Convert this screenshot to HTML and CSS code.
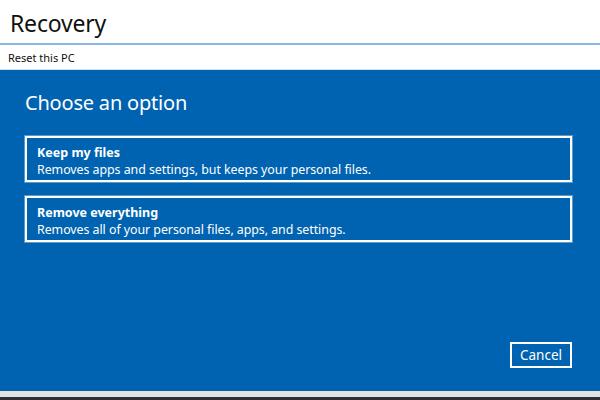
FILE: index.html
```html
<!DOCTYPE html>
<html lang="en">
<head>
<meta charset="utf-8">
<title>Recovery</title>
<link rel="stylesheet" href="styles.css">
</head>
<body>
<div class="app">
  <header class="header">
    <h1 class="title">Recovery</h1>
  </header>
  <div class="subbar">Reset this PC</div>
  <main class="dialog">
    <h2 class="dialog-title">Choose an option</h2>
    <div class="options">
      <button class="option">
        <span class="option-name">Keep my files</span>
        <span class="option-desc">Removes apps and settings, but keeps your personal files.</span>
      </button>
      <button class="option">
        <span class="option-name">Remove everything</span>
        <span class="option-desc">Removes all of your personal files, apps, and settings.</span>
      </button>
    </div>
    <div class="actions">
      <button class="cancel">Cancel</button>
    </div>
  </main>
  <div class="footer"></div>
</div>
</body>
</html>
```

FILE: styles.css
```css
* { box-sizing: border-box; }
html, body {
  margin: 0;
  padding: 0;
  width: 600px;
  height: 400px;
  overflow: hidden;
  background: #ffffff;
  font-family: "Noto Sans", "Open Sans", sans-serif;
}
.app {
  display: flex;
  flex-direction: column;
  height: 400px;
}
.header {
  height: 45px;
  border-bottom: 2px solid #8cb7e3;
  padding-left: 10px;
  flex: none;
}
.title {
  margin: 0;
  font-weight: 400;
  font-size: 23px;
  line-height: 28px;
  padding-top: 9px;
  color: #111;
  letter-spacing: -0.2px;
}
.subbar {
  height: 25px;
  flex: none;
  font-size: 11px;
  line-height: 25px;
  padding-left: 8px;
  color: #111;
  border-bottom: 1px solid #cfe0f1;
}
.dialog {
  flex: 1;
  background: #0063b1;
  color: #fff;
  display: flex;
  flex-direction: column;
  padding: 0 28px 23px 25px;
}
.dialog-title {
  margin: 0;
  font-weight: 400;
  font-size: 20px;
  line-height: 26px;
  padding-top: 20px;
  letter-spacing: -0.2px;
}
.options {
  display: flex;
  flex-direction: column;
  gap: 14px;
  margin-top: 20px;
}
.option {
  display: flex;
  flex-direction: column;
  align-items: flex-start;
  height: 46px;
  padding: 6px 10px 0 10px;
  background: transparent;
  border: 2px solid #ffffff;
  box-shadow: 0 0 0 1px rgba(255,255,255,0.35);
  color: #fff;
  font-family: inherit;
  text-align: left;
}
.option-name {
  font-weight: 700;
  font-size: 12.5px;
  line-height: 17px;
}
.option-desc {
  font-size: 12.4px;
  line-height: 17px;
  letter-spacing: -0.05px;
}
.actions {
  margin-top: auto;
  display: flex;
  justify-content: flex-end;
}
.cancel {
  width: 62px;
  height: 26px;
  background: transparent;
  border: 2px solid #ffffff;
  color: #fff;
  font-family: inherit;
  font-size: 13.5px;
  padding: 0;
}
.footer {
  height: 9px;
  flex: none;
  background: linear-gradient(#e2e2e2 0 6px, #2b2f36 6px);
}
```
